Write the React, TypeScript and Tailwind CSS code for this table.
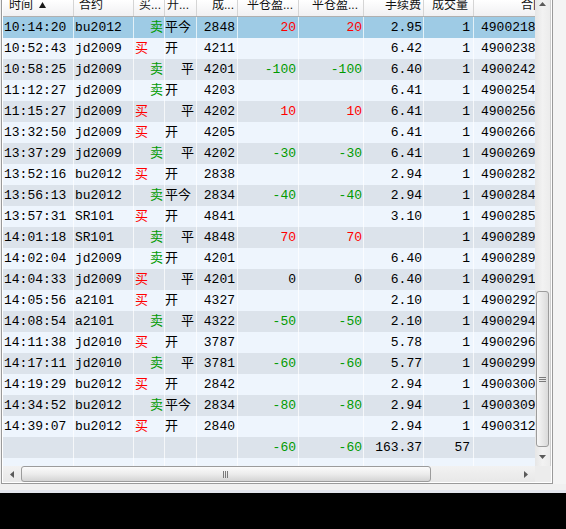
import React from "react";

// ─── Data ─────────────────────────────────────────────────────────────────

type Side = "B" | "S";
type Oc = "open" | "close" | "today";

interface Trade {
  time: string;
  code: string;
  side: Side;
  oc: Oc;
  price: string;
  pnl?: number;
  fee: string;
  vol: string;
  id: string;
}

const TRADES: Trade[] = [
  { time: "10:14:20", code: "bu2012", side: "S", oc: "today", price: "2848", pnl: 20, fee: "2.95", vol: "1", id: "49002185" },
  { time: "10:52:43", code: "jd2009", side: "B", oc: "open", price: "4211", fee: "6.42", vol: "1", id: "49002381" },
  { time: "10:58:25", code: "jd2009", side: "S", oc: "close", price: "4201", pnl: -100, fee: "6.40", vol: "1", id: "49002422" },
  { time: "11:12:27", code: "jd2009", side: "S", oc: "open", price: "4203", fee: "6.41", vol: "1", id: "49002544" },
  { time: "11:15:27", code: "jd2009", side: "B", oc: "close", price: "4202", pnl: 10, fee: "6.41", vol: "1", id: "49002566" },
  { time: "13:32:50", code: "jd2009", side: "B", oc: "open", price: "4205", fee: "6.41", vol: "1", id: "49002660" },
  { time: "13:37:29", code: "jd2009", side: "S", oc: "close", price: "4202", pnl: -30, fee: "6.41", vol: "1", id: "49002699" },
  { time: "13:52:16", code: "bu2012", side: "B", oc: "open", price: "2838", fee: "2.94", vol: "1", id: "49002822" },
  { time: "13:56:13", code: "bu2012", side: "S", oc: "today", price: "2834", pnl: -40, fee: "2.94", vol: "1", id: "49002844" },
  { time: "13:57:31", code: "SR101", side: "B", oc: "open", price: "4841", fee: "3.10", vol: "1", id: "49002855" },
  { time: "14:01:18", code: "SR101", side: "S", oc: "close", price: "4848", pnl: 70, fee: "", vol: "1", id: "49002890" },
  { time: "14:02:04", code: "jd2009", side: "S", oc: "open", price: "4201", fee: "6.40", vol: "1", id: "49002899" },
  { time: "14:04:33", code: "jd2009", side: "B", oc: "close", price: "4201", pnl: 0, fee: "6.40", vol: "1", id: "49002911" },
  { time: "14:05:56", code: "a2101", side: "B", oc: "open", price: "4327", fee: "2.10", vol: "1", id: "49002922" },
  { time: "14:08:54", code: "a2101", side: "S", oc: "close", price: "4322", pnl: -50, fee: "2.10", vol: "1", id: "49002944" },
  { time: "14:11:38", code: "jd2010", side: "B", oc: "open", price: "3787", fee: "5.78", vol: "1", id: "49002966" },
  { time: "14:17:11", code: "jd2010", side: "S", oc: "close", price: "3781", pnl: -60, fee: "5.77", vol: "1", id: "49002999" },
  { time: "14:19:29", code: "bu2012", side: "B", oc: "open", price: "2842", fee: "2.94", vol: "1", id: "49003000" },
  { time: "14:34:52", code: "bu2012", side: "S", oc: "today", price: "2834", pnl: -80, fee: "2.94", vol: "1", id: "49003099" },
  { time: "14:39:07", code: "bu2012", side: "B", oc: "open", price: "2840", fee: "2.94", vol: "1", id: "49003122" },
];

const GRID = "grid grid-cols-[70px_60px_31px_32px_41px_61px_65px_60px_50px_62px]";
const LINE = "border-l border-white/70";

function pnlColor(n?: number) {
  if (n === undefined || n === 0) return "text-black";
  return n > 0 ? "text-[#ff0000]" : "text-[#009a00]";
}

// ─── Header ───────────────────────────────────────────────────────────────

function Header() {
  const sep = "border-l border-[#d5d5d5]";
  const dots = <span className="font-['Liberation_Sans',sans-serif]">...</span>;
  return (
    <div className={`${GRID} h-[17px] border-b border-[#b0b0b0] bg-gradient-to-b from-white to-[#f0f0f2] text-[12px] leading-[12px] text-[#111] font-['Noto_Sans_CJK_SC',sans-serif]`}>
      <div className="flex items-start pl-[6px] -mt-[2px] gap-[6px]">
        <span>时间</span>
        <svg width="7" height="6" viewBox="0 0 7 6" className="mt-[4px]">
          <path d="M3.5 0 L7 6 L0 6 Z" fill="#1a1a1a" />
        </svg>
      </div>
      <div className={`${sep} pl-[5px]`}><span className="block -mt-[2px]">合约</span></div>
      <div className={`${sep} pl-[5px] whitespace-nowrap overflow-hidden`}><span className="block -mt-[2px]">买{dots}</span></div>
      <div className={`${sep} pl-[2px] whitespace-nowrap overflow-hidden`}><span className="block -mt-[2px]">开{dots}</span></div>
      <div className={`${sep} flex justify-end pr-[3px] whitespace-nowrap`}><span className="block -mt-[2px]">成{dots}</span></div>
      <div className={`${sep} flex justify-end pr-[5px] whitespace-nowrap`}><span className="block -mt-[2px]">平仓盈{dots}</span></div>
      <div className={`${sep} flex justify-end pr-[5px] whitespace-nowrap`}><span className="block -mt-[2px]">平仓盈{dots}</span></div>
      <div className={`${sep} flex justify-end pr-[2px] whitespace-nowrap`}><span className="block -mt-[2px]">手续费</span></div>
      <div className={`${sep} flex justify-end pr-[5px] whitespace-nowrap`}><span className="block -mt-[2px]">成交量</span></div>
      <div className={`${sep} pl-[47px] whitespace-nowrap overflow-hidden`}><span className="block -mt-[2px]">合同号</span></div>
    </div>
  );
}

// ─── Row ──────────────────────────────────────────────────────────────────

function Row({ t, idx }: { t: Trade; idx: number }) {
  const bg = idx === 0 ? "bg-[#9ecbe5]" : idx % 2 === 1 ? "bg-[#eef5fd]" : "bg-[#dce3eb]";
  const cell = "flex items-center overflow-hidden whitespace-nowrap";
  return (
    <div className={`${GRID} h-[21px] ${bg}`}>
      <div className={`${cell} pl-[1px]`}>{t.time}</div>
      <div className={`${cell} ${LINE} pl-[1px]`}>{t.code}</div>
      {t.side === "B" ? (
        <div className={`${cell} ${LINE} pl-[1px] text-[#ff0000]`}>买</div>
      ) : (
        <div className={`${cell} ${LINE} justify-end pr-[1px] text-[#009a00]`}>卖</div>
      )}
      {t.oc === "close" ? (
        <div className={`${cell} ${LINE} justify-end pr-[2px]`}>平</div>
      ) : (
        <div className={`${cell} ${LINE}`}>{t.oc === "open" ? "开" : "平今"}</div>
      )}
      <div className={`${cell} ${LINE} justify-end pr-[2px]`}>{t.price}</div>
      <div className={`${cell} ${LINE} justify-end pr-[2px] ${pnlColor(t.pnl)}`}>{t.pnl ?? ""}</div>
      <div className={`${cell} ${LINE} justify-end pr-[1px] ${pnlColor(t.pnl)}`}>{t.pnl ?? ""}</div>
      <div className={`${cell} ${LINE} justify-end pr-[1px]`}>{t.fee}</div>
      <div className={`${cell} ${LINE} justify-end pr-[3px]`}>{t.vol}</div>
      <div className={`${cell} ${LINE} pl-[7px]`}>{t.id}</div>
    </div>
  );
}

function SumRow() {
  const cell = "flex items-center overflow-hidden whitespace-nowrap";
  return (
    <div className={`${GRID} h-[21px] bg-[#dce3eb]`}>
      <div className={cell} />
      <div className={`${cell} ${LINE}`} />
      <div className={`${cell} ${LINE}`} />
      <div className={`${cell} ${LINE}`} />
      <div className={`${cell} ${LINE}`} />
      <div className={`${cell} ${LINE} justify-end pr-[2px] text-[#009a00]`}>-60</div>
      <div className={`${cell} ${LINE} justify-end pr-[1px] text-[#009a00]`}>-60</div>
      <div className={`${cell} ${LINE} justify-end pr-[1px]`}>163.37</div>
      <div className={`${cell} ${LINE} justify-end pr-[3px]`}>57</div>
      <div className={`${cell} ${LINE}`} />
    </div>
  );
}

function PartialRow() {
  return (
    <div className={`${GRID} h-[8px] bg-[#eef5fd]`}>
      {Array.from({ length: 10 }).map((_, i) => (
        <div key={i} className={i === 0 ? "" : LINE} />
      ))}
    </div>
  );
}

// ─── Scrollbars ───────────────────────────────────────────────────────────

function Arrow({ dir }: { dir: "up" | "down" | "left" | "right" }) {
  const d = {
    up: "M0 4 L3.5 0 L7 4 Z",
    down: "M0 0 L7 0 L3.5 4 Z",
    left: "M4 0 L4 7 L0 3.5 Z",
    right: "M0 0 L4 3.5 L0 7 Z",
  }[dir];
  const vert = dir === "up" || dir === "down";
  return (
    <svg width={vert ? 7 : 4} height={vert ? 4 : 7} viewBox={vert ? "0 0 7 4" : "0 0 4 7"}>
      <path d={d} fill="#5a5a5a" />
    </svg>
  );
}

function VScroll() {
  return (
    <div className="flex flex-col w-[16px] h-[466px] bg-gradient-to-r from-[#e6e6e6] via-[#f2f2f2] to-[#ececec] border-r border-[#cfcfcf]">
      <div className="h-[12px] flex items-start justify-center pt-[2px]">
        <Arrow dir="up" />
      </div>
      <div className="h-[279px]" />
      <div className="h-[156px] mx-[1px] rounded-[3px] border border-[#9c9c9c] bg-gradient-to-r from-[#f7f7f7] to-[#dadada] flex items-center justify-center">
        <div className="flex flex-col gap-[1px] mt-[20px]">
          <div className="w-[7px] h-[1px] bg-[#7a7a7a]" />
          <div className="w-[7px] h-[1px] bg-[#7a7a7a]" />
          <div className="w-[7px] h-[1px] bg-[#7a7a7a]" />
        </div>
      </div>
      <div className="flex-1 flex items-center justify-center">
        <Arrow dir="down" />
      </div>
    </div>
  );
}

function HScroll() {
  return (
    <div className="flex items-center h-[16px] w-[532px] bg-gradient-to-b from-[#f2f2f2] to-[#e8e8e8]">
      <div className="w-[18px] flex justify-center">
        <Arrow dir="left" />
      </div>
      <div className="w-[410px] h-[16px] rounded-[3px] border border-[#9c9c9c] bg-gradient-to-b from-[#fbfbfb] via-[#ececec] to-[#d4d4d4] flex items-center">
        <div className="flex gap-[1px] ml-[201px]">
          <div className="w-[1px] h-[7px] bg-[#7a7a7a]" />
          <div className="w-[1px] h-[7px] bg-[#7a7a7a]" />
          <div className="w-[1px] h-[7px] bg-[#7a7a7a]" />
        </div>
      </div>
      <div className="flex-1" />
      <div className="w-[18px] flex justify-center">
        <Arrow dir="right" />
      </div>
    </div>
  );
}

// ─── App ──────────────────────────────────────────────────────────────────

export default function App() {
  return (
    <div className="w-[566px] h-[529px] flex flex-col bg-black overflow-hidden">
      <div className="h-[493px] bg-[#f0f0f0] flex flex-col">
        <div className="flex">
          <div className="ml-[1px] w-[552px] border-l border-r border-b border-[#9a9a9a] bg-white pl-[1px] pr-[1px] pb-[1px]">
            <div className="flex">
              <div className="w-[532px] h-[466px] overflow-hidden text-[13px] text-black font-['Liberation_Mono','Noto_Sans_CJK_SC',monospace]">
                <Header />
                {TRADES.map((t, i) => (
                  <Row key={i} t={t} idx={i} />
                ))}
                <SumRow />
                <PartialRow />
              </div>
              <VScroll />
            </div>
            <div className="flex">
              <HScroll />
              <div className="w-[16px] h-[16px] bg-[#ececec]" />
            </div>
          </div>
          <div className="flex-1 bg-[#f4f4f4]" />
        </div>
        <div className="flex-1" />
        <div className="h-[3px] bg-[#e2e5ee]" />
      </div>
    </div>
  );
}
